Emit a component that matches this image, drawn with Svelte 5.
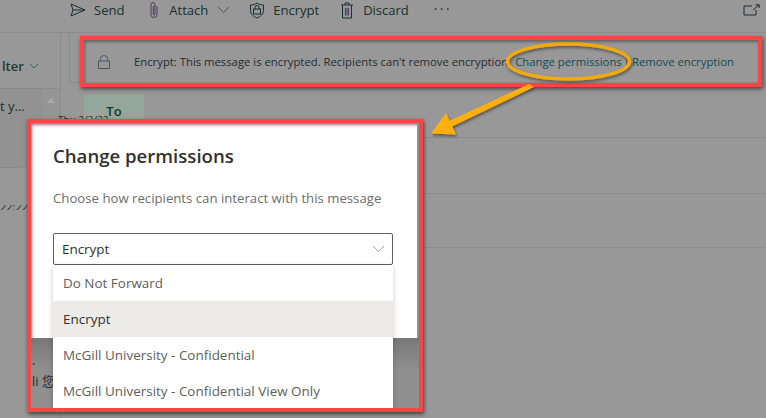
<script>
  const options = [
    'Do Not Forward',
    'Encrypt',
    'McGill University - Confidential',
    'McGill University - Confidential View Only'
  ];
  const selected = 'Encrypt';
</script>

<div class="page">
  <div class="toolbar">
    <button class="tool send">
      <svg width="16" height="14" viewBox="0 0 16 14"><path d="M1 1l14 6L1 13l2-6zM3 7h12" class="ink" /></svg>
      Send
    </button>
    <button class="tool attach">
      <svg width="12" height="18" viewBox="0 0 12 18"><path d="M9 5v8.500a3 3 0 0 1-6 0V3.500a2 2 0 0 1 4 0V13a.8.8 0 0 1-1.600 0V5" class="purple" /></svg>
      Attach
      <svg width="13" height="8" viewBox="0 0 13 8"><path d="M1 1l5.500 5.500L12 1" class="soft" /></svg>
    </button>
    <button class="tool encrypt">
      <svg width="16" height="17" viewBox="0 0 16 17"><path d="M8 1c2 1.500 4 2 6.500 2v5.500c0 3.500-3 6-6.500 7.500-3.500-1.500-6.500-4-6.500-7.500V3C4 3 6 2.500 8 1z" class="ink" /><rect x="4.500" y="7" width="7" height="5" class="ink" /><path d="M6 7V5.500a2 2 0 0 1 4 0V7" class="ink" /></svg>
      Encrypt
    </button>
    <button class="tool discard">
      <svg width="14" height="17" viewBox="0 0 14 17"><path d="M1 3h12M5 3V1h4v2M2.500 3v13h9V3" class="ink" /><path d="M5.500 6v7.500M7 6v7.500M8.500 6v7.500" class="purple" /></svg>
      Discard
    </button>
    <span class="dots">···</span>
    <svg class="popout" width="17" height="12" viewBox="0 0 17 12"><path d="M9 2H1v9h12V6M10 6l6-5M12.500 .8H16.200V4" class="ink" /></svg>
  </div>

  <div class="content">
    <aside class="list">
      <div class="filter">lter <svg width="10" height="6" viewBox="0 0 10 6"><path d="M1 1l4 4 4-4" class="blue" /></svg></div>
      <div class="mail">
        <span>t y...</span>
        <div class="track"><i class="scroll-up"></i></div>
      </div>
      <div class="stamp"><span>22:22</span></div>
    </aside>
    <main class="compose">
      <div class="info-slot"></div>
      <div class="to-row">
        <span class="to">To</span>
        <div class="date">Thu 2/3/22</div>
      </div>
      <div class="row first-row"></div>
      <div class="row second-row"></div>
    </main>
  </div>

  <!-- annotation: encryption bar -->
  <div class="bar">
    <svg width="12" height="14" viewBox="0 0 12 14"><rect x=".5" y="6" width="11" height="7.500" class="slate" /><path d="M2.500 6V4a3.500 3.500 0 0 1 7 0v2" class="slate" /></svg>
    <span class="bar-text">Encrypt: This message is encrypted. Recipients can't remove encryption.</span>
    <span class="link first">Change permissions</span>
    <span class="sep">|</span>
    <span class="link">Remove encryption</span>
  </div>

  <!-- annotation: orange ellipse and arrow -->
  <svg class="marks" width="766" height="418" viewBox="0 0 766 418">
    <defs>
      <filter id="drop" x="-20%" y="-20%" width="140%" height="140%">
        <feDropShadow dx="1" dy="2" stdDeviation="1.500" flood-color="#000" flood-opacity=".45" />
      </filter>
    </defs>
    <g filter="url(#drop)">
      <ellipse cx="568.500" cy="61.500" rx="61" ry="17.500" fill="none" stroke="#f2a90e" stroke-width="3.500" />
      <path d="M529 84L534 87L451 127L447 122z" fill="#fcaf0b" />
      <path d="M431 133.500L446 113L456 134.500z" fill="#fcaf0b" />
    </g>
  </svg>

  <!-- annotation: dialog -->
  <div class="dialog-frame">
    <section class="dialog">
      <h2>Change permissions</h2>
      <p>Choose how recipients can interact with this message</p>
      <div class="select">
        <span>{selected}</span>
        <svg width="13" height="8" viewBox="0 0 13 8"><path d="M1 1l5.500 5.500L12 1" class="pale" /></svg>
      </div>
    </section>
    <div class="under">
      <span class="under-dot">.</span>
      <span class="under-text">li 您</span>
    </div>
    <ul class="menu">
      {#each options as option}
        <li class:active={option === selected}>{option}</li>
      {/each}
    </ul>
  </div>
</div>

<style>
  :global(body) {
    margin: 0;
    background: #989898;
  }
  .page {
    position: relative;
    width: 766px;
    height: 418px;
    overflow: hidden;
    background: #989898;
    font-family: "Open Sans", "Noto Sans CJK SC", sans-serif;
    color: #1e2a26;
  }
  .toolbar {
    display: flex;
    align-items: center;
    height: 20px;
    padding-left: 70px;
    font-size: 13px;
  }
  .tool {
    display: flex;
    align-items: center;
    gap: 8px;
    padding: 0;
    border: 0;
    background: none;
    font: inherit;
    color: #17302c;
  }
  .send {
    margin-right: 24px;
  }
  .attach {
    gap: 9px;
    margin-right: 19px;
  }
  .encrypt {
    margin-right: 21px;
  }
  .discard {
    gap: 9px;
    margin-right: 25px;
  }
  .dots {
    font-size: 14px;
    letter-spacing: 2.400px;
    color: #333;
    margin-top: -3px;
  }
  .popout {
    margin-left: auto;
    margin-right: 6px;
    margin-top: -1px;
  }
  .ink, .purple, .soft, .pale, .blue, .slate {
    fill: none;
    stroke-width: 1;
  }
  .ink {
    stroke: #18302e;
  }
  .purple {
    stroke: #4a3a60;
  }
  .soft {
    stroke: #555;
  }
  .pale {
    stroke: #a19f9d;
  }
  .blue {
    stroke: #2f5f78;
  }
  .slate {
    stroke: #4c5560;
  }
  .content {
    display: grid;
    grid-template-columns: 61px 1fr;
    height: 385px;
    margin-top: 12px;
    border-top: 1px solid #8c8c8c;
  }
  .list {
    display: flex;
    flex-direction: column;
    border-right: 1px solid #8c8c8c;
  }
  .filter {
    box-sizing: border-box;
    display: flex;
    align-items: center;
    gap: 5px;
    height: 56px;
    padding: 10px 0 0 2px;
    font-size: 13px;
    font-weight: 600;
    color: #24382e;
    border-bottom: 1px solid #8c8c8c;
  }
  .mail {
    box-sizing: border-box;
    display: flex;
    justify-content: space-between;
    height: 79px;
    font-size: 13px;
    line-height: 35px;
    background: #929292;
    border-bottom: 1px solid #8c8c8c;
  }
  .track {
    width: 18px;
    display: flex;
    justify-content: center;
    background: #959595;
  }
  .scroll-up {
    width: 0;
    height: 0;
    margin-top: 9px;
    border: 4px solid transparent;
    border-top: 0;
    border-bottom: 5px solid #a8a8a8;
  }
  .stamp {
    height: 5px;
    margin-top: 37px;
    overflow: hidden;
    font-size: 11px;
    color: #2d2d2d;
  }
  .stamp span {
    display: block;
    margin-top: -5px;
    line-height: 14px;
  }
  .compose {
    padding-left: 8px;
  }
  .info-slot {
    height: 49px;
    border-left: 1px solid #8c8c8c;
    border-bottom: 1px solid #8c8c8c;
  }
  .to-row {
    box-sizing: border-box;
    height: 55px;
    padding: 12px 0 0 15px;
    border-bottom: 1px solid #8c8c8c;
  }
  .to {
    display: block;
    width: 60px;
    height: 24px;
    background: #93a89b;
    color: #12382a;
    font-size: 13px;
    font-weight: 600;
    line-height: 32px;
    text-align: center;
  }
  .date {
    margin: -6px 0 0 -26px;
    font-size: 10px;
    line-height: 14px;
    color: #2d2d2d;
  }
  .row {
    box-sizing: border-box;
    border-bottom: 1px solid #8c8c8c;
  }
  .first-row {
    height: 56px;
  }
  .second-row {
    height: 54px;
  }
  .bar {
    position: absolute;
    left: 80px;
    top: 36px;
    width: 674px;
    height: 43px;
    display: flex;
    align-items: center;
    border: 4px solid #fb4545;
    box-shadow: 1px 2px 4px rgba(0, 0, 0, .55), inset 1px 2px 3px rgba(0, 0, 0, .35);
    font-size: 11.300px;
    color: #262b2e;
    white-space: nowrap;
  }
  .bar svg {
    flex: none;
    margin: 0 24px 0 14px;
  }
  .link {
    color: #0f4c50;
  }
  .first {
    margin-left: 4px;
  }
  .sep {
    margin: 0 2px;
  }
  .marks {
    position: absolute;
    left: 0;
    top: 0;
  }
  .dialog-frame {
    position: absolute;
    left: 27px;
    top: 119px;
    width: 388px;
    height: 285px;
    overflow: hidden;
    border: 4px solid #fb4545;
    box-shadow: 1px 2px 4px rgba(0, 0, 0, .6);
    background: #8f8f8f;
  }
  .dialog {
    box-sizing: border-box;
    height: 215px;
    margin-right: 2px;
    padding: 19px 22px 0;
    background: #fff;
    box-shadow: inset 2px 3px 3px -1px rgba(0, 0, 0, .5);
    color: #323130;
  }
  h2 {
    margin: 0;
    font-size: 18.600px;
    line-height: 27px;
    font-weight: 600;
  }
  p {
    margin: 20px 0 0;
    font-size: 13.200px;
    line-height: 18px;
    color: #6f6d6b;
  }
  .select {
    box-sizing: border-box;
    display: flex;
    align-items: center;
    justify-content: space-between;
    width: 340px;
    height: 32px;
    margin-top: 26px;
    padding: 0 7px 0 8px;
    border: 1px solid #605e5c;
    border-radius: 2px;
    font-size: 13.400px;
  }
  .under {
    display: flex;
    flex-direction: column;
    height: 70px;
    padding-left: 1px;
    font-size: 13px;
    line-height: 18px;
    color: #2c2c2c;
    background: linear-gradient(#787878, #8f8f8f 45%);
  }
  .under-dot {
    margin-top: 13px;
  }
  .under-text {
    margin-top: 3px;
    white-space: nowrap;
  }
  .menu {
    position: absolute;
    left: 22px;
    top: 142px;
    width: 340px;
    margin: 0;
    padding: 0;
    list-style: none;
    background: #fff;
    box-shadow: 0 2px 6px rgba(0, 0, 0, .2);
  }
  li {
    height: 36px;
    padding-left: 10px;
    font-size: 13.460px;
    line-height: 36px;
    color: #605e5c;
    white-space: nowrap;
  }
  li.active {
    background: #edebe9;
    color: #323130;
  }
</style>
